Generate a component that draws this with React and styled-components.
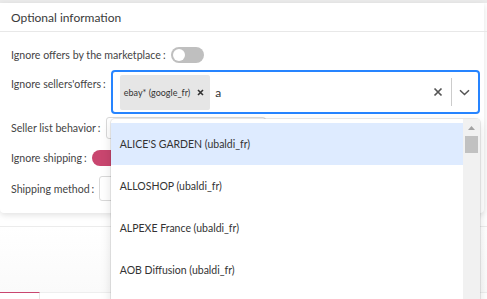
import React from "react";
import styled, { createGlobalStyle } from "styled-components";

const options = [
  "ALICE'S GARDEN (ubaldi_fr)",
  "ALLOSHOP (ubaldi_fr)",
  "ALPEXE France (ubaldi_fr)",
  "AOB Diffusion (ubaldi_fr)",
];

const App = () => {
  return (
    <Page>
      <GlobalStyle />
      <TopStrip />
      <Card>
        <Header>Optional information</Header>
        <Body>
          <Row $h={18}>
            <Label>Ignore offers by the marketplace</Label>
            <Toggle />
          </Row>
          <Row $h={44} $mt={6} $top>
            <Label $pt={8}>Ignore sellers'offers</Label>
            <SelectWrap>
              <Select>
                <Values>
                  <Tag>
                    <TagText>ebay* (google_fr)</TagText>
                    <TagRemove>
                      <svg width="7" height="7" viewBox="0 0 7 7">
                        <path d="M1 1L6 6M6 1L1 6" stroke="#333" strokeWidth="1.6" />
                      </svg>
                    </TagRemove>
                  </Tag>
                  <Typed>a</Typed>
                </Values>
                <Indicators>
                  <IconBox>
                    <svg width="10" height="10" viewBox="0 0 10 10">
                      <path d="M1.5 1.5L8.5 8.5M8.5 1.5L1.5 8.5" stroke="#555" strokeWidth="1.7" />
                    </svg>
                  </IconBox>
                  <Sep />
                  <IconBox>
                    <svg width="11" height="7" viewBox="0 0 11 7">
                      <path d="M1 1.2L5.5 5.5L10 1.2" stroke="#555" strokeWidth="1.5" fill="none" />
                    </svg>
                  </IconBox>
                </Indicators>
              </Select>
              <Menu>
                <List>
                  {options.map((o, i) => (
                    <Option key={o} $active={i === 0}>
                      {o}
                    </Option>
                  ))}
                </List>
                <Scrollbar>
                  <Arrow>
                    <svg width="7" height="4" viewBox="0 0 7 4">
                      <path d="M0 4L3.5 0L7 4Z" fill="#a3a3a3" />
                    </svg>
                  </Arrow>
                  <Thumb />
                </Scrollbar>
              </Menu>
            </SelectWrap>
          </Row>
          <Row $h={20} $mt={4}>
            <Label>Seller list behavior</Label>
            <Input $w={160} $h={22} />
          </Row>
          <Row $h={20} $mt={10}>
            <Label>Ignore shipping</Label>
            <Toggle $on />
          </Row>
          <Row $h={25} $mt={8}>
            <Label>Shipping method</Label>
            <Input $w={160} $h={25} />
          </Row>
        </Body>
      </Card>
      <Below />
      <Tabs>
        <Tab $active />
        <TabRest />
      </Tabs>
    </Page>
  );
};
export default App;

const GlobalStyle = createGlobalStyle`
  body {
    margin: 0;
    background: #fff;
    font-family: Lato, "Noto Sans", sans-serif;
    color: #333;
  }
`;
const Page = styled.div`
  width: 487px;
  height: 299px;
  overflow: hidden;
  display: flex;
  flex-direction: column;
  background: #fff;
`;
const TopStrip = styled.div`
  height: 3px;
  background: #ebebeb;
  flex-shrink: 0;
`;
const Card = styled.div`
  width: 484px;
  background: #fff;
  border-radius: 0 0 4px 4px;
  box-shadow: 0 2px 6px rgba(0, 0, 0, 0.12);
  position: relative;
  z-index: 1;
  flex-shrink: 0;
`;
const Header = styled.div`
  height: 28px;
  display: flex;
  align-items: center;
  padding-left: 11px;
  font-size: 12px;
  color: #3a3a3a;
  border-bottom: 1px solid #e8e8e8;
  margin-right: -3px;
`;
const Body = styled.div`
  padding: 14px 4px 12px 11px;
  display: flex;
  flex-direction: column;
`;
const Row = styled.div`
  display: flex;
  align-items: ${(p) => (p.$top ? "flex-start" : "center")};
  height: ${(p) => p.$h}px;
  margin-top: ${(p) => p.$mt || 0}px;
`;
const Label = styled.div`
  font-size: 10.6px;
  color: #444;
  white-space: nowrap;
  padding-top: ${(p) => p.$pt || 0}px;
  &::after {
    content: ":";
    margin: 0 5px 0 2px;
  }
`;
const Toggle = styled.div`
  width: 33px;
  height: 16px;
  border-radius: 8px;
  background: ${(p) => (p.$on ? "#c9466f" : "#bfbfbf")};
  position: relative;
  flex-shrink: 0;
  &::after {
    content: "";
    position: absolute;
    top: 2px;
    left: ${(p) => (p.$on ? "19px" : "2px")};
    width: 12px;
    height: 12px;
    border-radius: 50%;
    background: #fff;
  }
`;
const Input = styled.div`
  width: ${(p) => p.$w}px;
  height: ${(p) => p.$h}px;
  border: 1px solid #d9d9d9;
  border-radius: 3px;
  box-sizing: border-box;
`;
const SelectWrap = styled.div`
  position: relative;
  width: 369px;
`;
const Select = styled.div`
  height: 44px;
  box-sizing: border-box;
  border: 2px solid #2684ff;
  border-radius: 4px;
  display: flex;
  align-items: center;
  background: #fff;
`;
const Values = styled.div`
  flex: 1;
  display: flex;
  align-items: center;
  padding-left: 7px;
`;
const Tag = styled.div`
  height: 35px;
  background: #e6e6e6;
  border-radius: 2px;
  display: flex;
  align-items: center;
  padding: 0 6px 0 4px;
`;
const TagText = styled.span`
  font-size: 9px;
  color: #333;
`;
const TagRemove = styled.span`
  display: flex;
  margin-left: 7px;
`;
const Typed = styled.span`
  font-size: 12px;
  color: #333;
  margin-left: 5px;
`;
const Indicators = styled.div`
  display: flex;
  align-items: center;
  height: 100%;
`;
const IconBox = styled.div`
  width: 26px;
  display: flex;
  justify-content: center;
  align-items: center;
`;
const Sep = styled.div`
  width: 1px;
  height: 28px;
  background: #ccc;
`;
const Menu = styled.div`
  position: absolute;
  top: 49px;
  left: 0;
  width: 369px;
  height: 190px;
  background: #fff;
  border-radius: 4px;
  box-shadow: 0 0 0 1px rgba(0, 0, 0, 0.08), 0 4px 11px rgba(0, 0, 0, 0.12);
  display: flex;
  overflow: hidden;
  z-index: 5;
`;
const List = styled.div`
  flex: 1;
  padding-top: 4px;
`;
const Option = styled.div`
  height: 42px;
  display: flex;
  align-items: center;
  padding-left: 9px;
  font-size: 10.5px;
  color: #333;
  background: ${(p) => (p.$active ? "#deebff" : "transparent")};
`;
const Scrollbar = styled.div`
  width: 17px;
  background: #f1f1f1;
  display: flex;
  flex-direction: column;
  align-items: center;
`;
const Arrow = styled.div`
  height: 17px;
  display: flex;
  align-items: center;
`;
const Thumb = styled.div`
  width: 13px;
  height: 17px;
  background: #c1c1c1;
`;
const Below = styled.div`
  height: 65px;
  margin-top: 13px;
  border-top: 1px solid #ececec;
  background: linear-gradient(#fff, #fafafa);
  flex-shrink: 0;
`;
const Tabs = styled.div`
  display: flex;
  height: 12px;
  flex-shrink: 0;
`;
const Tab = styled.div`
  width: 39px;
  border-top: 1px solid #c9466f;
  border-right: 1px solid #e8e8e8;
  background: #fff;
`;
const TabRest = styled.div`
  flex: 1;
  border-top: 1px solid #eee;
  background: #fff;
`;
